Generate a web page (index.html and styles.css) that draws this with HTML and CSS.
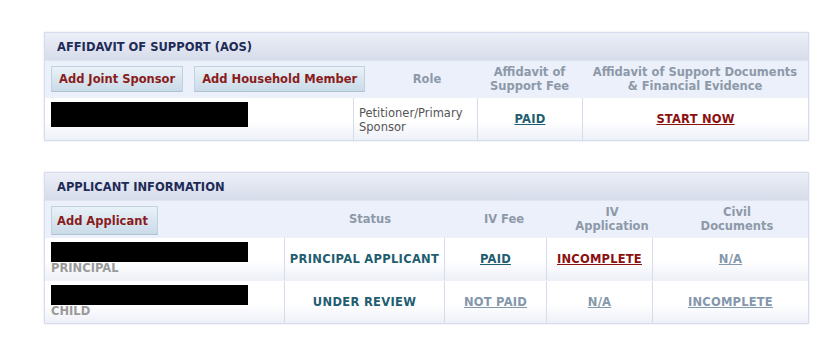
FILE: index.html
```html
<!DOCTYPE html>
<html lang="en">
<head>
    <meta charset="UTF-8">
    <title>Case Status</title>
    <link rel="stylesheet" href="styles.css">
</head>
<body>
    <div class="panel aos">
        <div class="panel-title">AFFIDAVIT OF SUPPORT (AOS)</div>
        <div class="sub-head">
            <div class="btn-group">
                <button class="btn">Add Joint Sponsor</button>
                <button class="btn">Add Household Member</button>
            </div>
            <div class="col-head role-head">Role</div>
            <div class="col-head">Affidavit of<br>Support Fee</div>
            <div class="col-head">Affidavit of Support Documents<br>&amp; Financial Evidence</div>
        </div>
        <div class="row">
            <div class="cell name-cell"><div class="redacted"></div></div>
            <div class="cell role-cell">Petitioner/Primary<br>Sponsor</div>
            <div class="cell center"><a href="#" class="link teal">PAID</a></div>
            <div class="cell center"><a href="#" class="link red">START NOW</a></div>
        </div>
    </div>

    <div class="panel applicants">
        <div class="panel-title">APPLICANT INFORMATION</div>
        <div class="sub-head">
            <div class="btn-group">
                <button class="btn">Add Applicant</button>
            </div>
            <div class="col-head">Status</div>
            <div class="col-head">IV Fee</div>
            <div class="col-head">IV<br>Application</div>
            <div class="col-head">Civil<br>Documents</div>
        </div>
        <div class="row">
            <div class="cell name-cell">
                <div class="redacted"></div>
                <div class="rel">PRINCIPAL</div>
            </div>
            <div class="cell center status">PRINCIPAL APPLICANT</div>
            <div class="cell center"><a href="#" class="link teal">PAID</a></div>
            <div class="cell center"><a href="#" class="link red">INCOMPLETE</a></div>
            <div class="cell center"><a href="#" class="link muted">N/A</a></div>
        </div>
        <div class="row">
            <div class="cell name-cell">
                <div class="redacted"></div>
                <div class="rel">CHILD</div>
            </div>
            <div class="cell center status">UNDER REVIEW</div>
            <div class="cell center"><a href="#" class="link muted">NOT PAID</a></div>
            <div class="cell center"><a href="#" class="link muted">N/A</a></div>
            <div class="cell center"><a href="#" class="link muted">INCOMPLETE</a></div>
        </div>
    </div>
</body>
</html>
```

FILE: styles.css
```css
:root {
    --border: #d6dcec;
    --title-text: #1e2b57;
    --head-text: #8d99a9;
    --btn-text: #8a1c1c;
    --teal: #1f5d70;
    --dark-red: #8b1010;
    --muted: #8497ab;
}

* {
    margin: 0;
    padding: 0;
    box-sizing: border-box;
}

body {
    background: #ffffff;
    font-family: "DejaVu Sans", Verdana, sans-serif;
    font-size: 11.5px;
    color: #444;
    padding: 32px 25px 0 44px;
}

.panel {
    width: 765px;
    border: 1px solid var(--border);
    margin-bottom: 31px;
    box-shadow: 0 0 2px rgba(180, 190, 215, 0.4);
}

.panel-title {
    height: 28px;
    line-height: 28px;
    padding-left: 12px;
    font-weight: bold;
    color: var(--title-text);
    background: linear-gradient(#eceff7, #d6dcea);
    border-bottom: 1px solid #dfe4f0;
}

.sub-head {
    display: grid;
    background: #ebf0fa;
    align-items: center;
    height: 36px;
}

.aos .sub-head,
.aos .row {
    grid-template-columns: 308px 124px 105px 1fr;
}

.applicants .sub-head {
    grid-template-columns: 245px 160px 108px 108px 1fr;
}

.applicants .row {
    grid-template-columns: 239px 160px 102px 106px 1fr;
}

.btn-group {
    display: flex;
    gap: 11px;
    padding-left: 6px;
    align-self: start;
    padding-top: 5px;
}

.btn {
    font-family: inherit;
    font-size: 11.5px;
    font-weight: bold;
    color: var(--btn-text);
    background: linear-gradient(#e9f1f7, #c9dbe8);
    border: 1px solid #c0d2e0;
    border-bottom-color: #adc3d4;
    height: 26px;
    padding: 0 7px;
    white-space: nowrap;
}

.applicants .btn {
    height: 29px;
    padding: 0 5px;
    width: 107px;
    text-align: left;
}

.col-head {
    text-align: center;
    font-weight: bold;
    color: var(--head-text);
    line-height: 14px;
}

.role-head {
    padding-left: 24px;
}

.row {
    display: grid;
    height: 43px;
    background: linear-gradient(#ffffff 55%, #eef0f8);
    border-top: 1px solid #eef1f8;
}

.cell {
    display: flex;
    align-items: center;
    border-left: 1px solid var(--border);
}

.cell:first-child {
    border-left: none;
}

.center {
    justify-content: center;
}

.name-cell {
    flex-direction: column;
    align-items: flex-start;
    justify-content: flex-start;
    padding: 4px 0 0 6px;
}

.redacted {
    width: 197px;
    height: 25px;
    background: #000;
}

.applicants .redacted {
    height: 20px;
    width: 197px;
}

.rel {
    font-weight: bold;
    color: #9a9a9a;
    margin-top: -1px;
}

.role-cell {
    padding-left: 5px;
    padding-top: 2px;
    line-height: 14px;
    color: #555;
}

.status {
    font-weight: bold;
    color: var(--teal);
    letter-spacing: 0.3px;
}

.link {
    font-weight: bold;
    text-decoration: underline;
    letter-spacing: 0.2px;
}

.teal { color: var(--teal); }
.red { color: var(--dark-red); }
.muted { color: var(--muted); }
```
